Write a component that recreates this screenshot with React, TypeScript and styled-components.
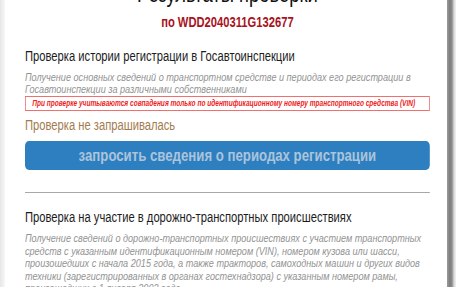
import React from "react";
import styled, { createGlobalStyle } from "styled-components";

const GlobalStyle = createGlobalStyle`
  html, body {
    margin: 0;
    padding: 0;
    background: #fff;
    font-family: "Liberation Sans", Arial, sans-serif;
  }
`;

const Page = styled.div`
  display: flex;
  width: 456px;
  height: 287px;
  overflow: hidden;
  background: linear-gradient(to right, #e6e6e6, #f7f7f7 5px, #fff 6px);
`;

const Card = styled.div`
  margin-left: 5px;
  width: 442px;
  flex: none;
  background: #fff;
`;

/* the whole sheet is set in a condensed face, so squeeze it horizontally */
const Sheet = styled.div`
  width: 552px;
  padding: 0 21px 0 25px;
  box-sizing: border-box;
  transform: scaleX(0.8);
  transform-origin: left top;
`;

const Edge = styled.div`
  width: 9px;
  flex: none;
  background: linear-gradient(to right, #9a9a9a, #7d7d7d 3px, #8d8d8d 5px, #d8d8d8 7px, #f2f2f2);
`;

const Title = styled.h1`
  margin: -18px 0 0;
  font-size: 23px;
  line-height: 24px;
  font-weight: normal;
  color: #111;
  text-align: center;
`;

const Vin = styled.div`
  margin-top: 7.5px;
  font-size: 14px;
  line-height: 16px;
  font-weight: bold;
  color: #a8121c;
  text-align: center;
`;

const Section = styled.section<{ $top: number }>`
  padding-top: ${(p) => p.$top}px;
`;

const Heading = styled.h2`
  margin: 0;
  font-size: 14px;
  line-height: 18px;
  font-weight: normal;
  color: #1c1c1c;
`;

const Description = styled.p`
  margin: 6px 0 0;
  font-size: 11.4px;
  line-height: 12.4px;
  font-style: italic;
  color: #939393;
  white-space: nowrap;
`;

const Notice = styled.div`
  margin-top: 1px;
  border: 1px solid #f07070;
  padding: 2px 8px;
  font-size: 8.2px;
  line-height: 9px;
  font-style: italic;
  font-weight: bold;
  color: #ee1c24;
  white-space: nowrap;
`;

const Status = styled.div`
  margin-top: 6px;
  font-size: 14px;
  line-height: 16px;
  color: #a37b4f;
`;

const RequestButton = styled.button`
  display: block;
  width: 100%;
  margin-top: 8px;
  height: 29px;
  border: none;
  border-radius: 5px;
  background: #2e7fbf;
  color: #aac4dc;
  font-family: inherit;
  font-size: 16.5px;
  font-weight: bold;
  cursor: pointer;
`;

const Divider = styled.hr`
  margin: 22px 0 0;
  border: none;
  border-top: 1px solid #a8a8a8;
`;

const App: React.FC = () => {
  return (
    <>
      <GlobalStyle />
      <Page>
        <Card>
          <Sheet>
            <Title>Результаты проверки</Title>
            <Vin>по WDD2040311G132677</Vin>
            <Section $top={17}>
              <Heading>Проверка истории регистрации в Госавтоинспекции</Heading>
              <Description>
                Получение основных сведений о транспортном средстве и периодах его регистрации в
                <br />
                Госавтоинспекции за различными собственниками
              </Description>
              <Notice>
                При проверке учитываются совпадения только по идентификационному номеру
                транспортного средства (VIN)
              </Notice>
              <Status>Проверка не запрашивалась</Status>
              <RequestButton>запросить сведения о периодах регистрации</RequestButton>
            </Section>
            <Divider />
            <Section $top={15}>
              <Heading>Проверка на участие в дорожно-транспортных происшествиях</Heading>
              <Description>
                Получение сведений о дорожно-транспортных происшествиях с участием транспортных
                <br />
                средств с указанным идентификационным номером (VIN), номером кузова или шасси,
                <br />
                произошедших с начала 2015 года, а также тракторов, самоходных машин и других видов
                <br />
                техники (зарегистрированных в органах гостехнадзора) с указанным номером рамы,
                <br />
                произошедших с 1 января 2002 года
              </Description>
            </Section>
          </Sheet>
        </Card>
        <Edge />
      </Page>
    </>
  );
};

export default App;
